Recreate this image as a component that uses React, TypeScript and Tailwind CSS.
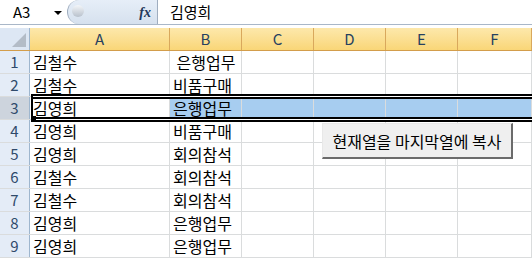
import React from "react";

const rows: [string, string][] = [
  ["김철수", " 은행업무"],
  ["김철수", "비품구매"],
  ["김영희", "은행업무"],
  ["김영희", "비품구매"],
  ["김영희", "회의참석"],
  ["김철수", "회의참석"],
  ["김철수", "회의참석"],
  ["김영희", "은행업무"],
  ["김영희", "은행업무"],
];

const cols = ["A", "B", "C", "D", "E", "F"];
const font = { fontFamily: '"Noto Sans CJK KR", "Noto Sans", sans-serif' };

function FormulaBar() {
  return (
    <div className="flex h-[25px] border-b border-[#a9b7c8] bg-white">
      <div className="relative flex w-[67px] items-center pl-[13px] text-[15px] text-black">
        A3
        <span className="absolute left-[54px] top-[11px] h-0 w-0 border-x-[4px] border-t-[4px] border-x-transparent border-t-black" />
      </div>
      <div className="relative flex w-[91px] items-center justify-end rounded-l-[13px] border border-t-0 border-b-0 border-[#9fadbf] bg-gradient-to-b from-[#e6eef8] to-[#d6e1ee] pr-[6px]">
        <span className="absolute left-[4px] top-[5px] h-[12px] w-[12px] rounded-full bg-gradient-to-b from-[#f4f6f9] to-[#b8c1cc]" />
        <span className="text-[14px] font-bold italic text-[#22385a]" style={{ fontFamily: '"Liberation Serif", serif' }}>
          fx
        </span>
      </div>
      <div className="flex flex-1 items-center pl-[12px] text-[15px] text-black">김영희</div>
    </div>
  );
}

export default function App() {
  const colW = ["w-[140px]", "w-[72px]", "w-[72px]", "w-[72px]", "w-[72px]", "w-[74px]"];
  return (
    <div className="relative h-[258px] w-[532px] overflow-hidden bg-white" style={font}>
      <FormulaBar />
      <div className="h-[3px]" />
      {/* column headers */}
      <div className="flex h-[23px] border-b border-[#d39d4b]">
        <div className="relative w-[30px] border-r border-[#9eb6ce] bg-[#dde7f4]">
          <svg className="absolute bottom-[3px] right-[3px]" width="14" height="14" viewBox="0 0 14 14">
            <polygon points="14,0 14,14 0,14" fill="#b3bcc7" />
          </svg>
        </div>
        {cols.map((c, i) => (
          <div
            key={c}
            className={`${colW[i]} flex items-center justify-center border-r border-[#d9a85c] bg-gradient-to-b from-[#fde8ab] to-[#f9d677] text-[15px] text-[#27415f]`}
          >
            {c}
          </div>
        ))}
      </div>
      {/* rows */}
      {rows.map(([a, b], r) => {
        const sel = r === 2;
        return (
          <div key={r} className="flex h-[23px] border-b border-[#dadcdd]">
            <div
              className={`flex w-[30px] items-center justify-center border-r border-[#9eb6ce] text-[15px] text-[#2f4a6b] ${
                sel ? "bg-[#cdd4dd]" : "bg-[#e4ecf7]"
              }`}
            >
              {r + 1}
            </div>
            {cols.map((c, i) => (
              <div
                key={c}
                className={`${colW[i]} flex items-center whitespace-pre border-r border-[#dadcdd] pl-[3px] text-[16px] text-black ${
                  sel && i > 0 ? "bg-[#a7cdf0]" : "bg-white"
                }`}
              >
                {i === 0 ? a : i === 1 ? b : ""}
              </div>
            ))}
          </div>
        );
      })}

      {/* selection frame over row 3 */}
      <div className="pointer-events-none absolute left-[31px] right-0 top-[94px] h-[28px]">
        <div className="absolute inset-x-0 top-0 h-[5px] border-y-2 border-black bg-white" />
        <div className="absolute inset-x-0 bottom-0 h-[5px] border-y-2 border-black bg-white" />
        <div className="absolute bottom-0 left-0 top-0 w-[2px] bg-black" />
        <div className="absolute bottom-[2px] left-[1px] h-[4px] w-[4px] bg-black" />
      </div>

      {/* button */}
      <div className="absolute left-[322px] top-[123px] flex h-[36px] w-[191px] items-center justify-center border-b-2 border-l border-r-2 border-t border-b-[#6b6b6b] border-l-[#e8e8e8] border-r-[#6b6b6b] border-t-[#e8e8e8] bg-[#efefef] text-[16px] text-black">
        현재열을 마지막열에 복사
      </div>
    </div>
  );
}
